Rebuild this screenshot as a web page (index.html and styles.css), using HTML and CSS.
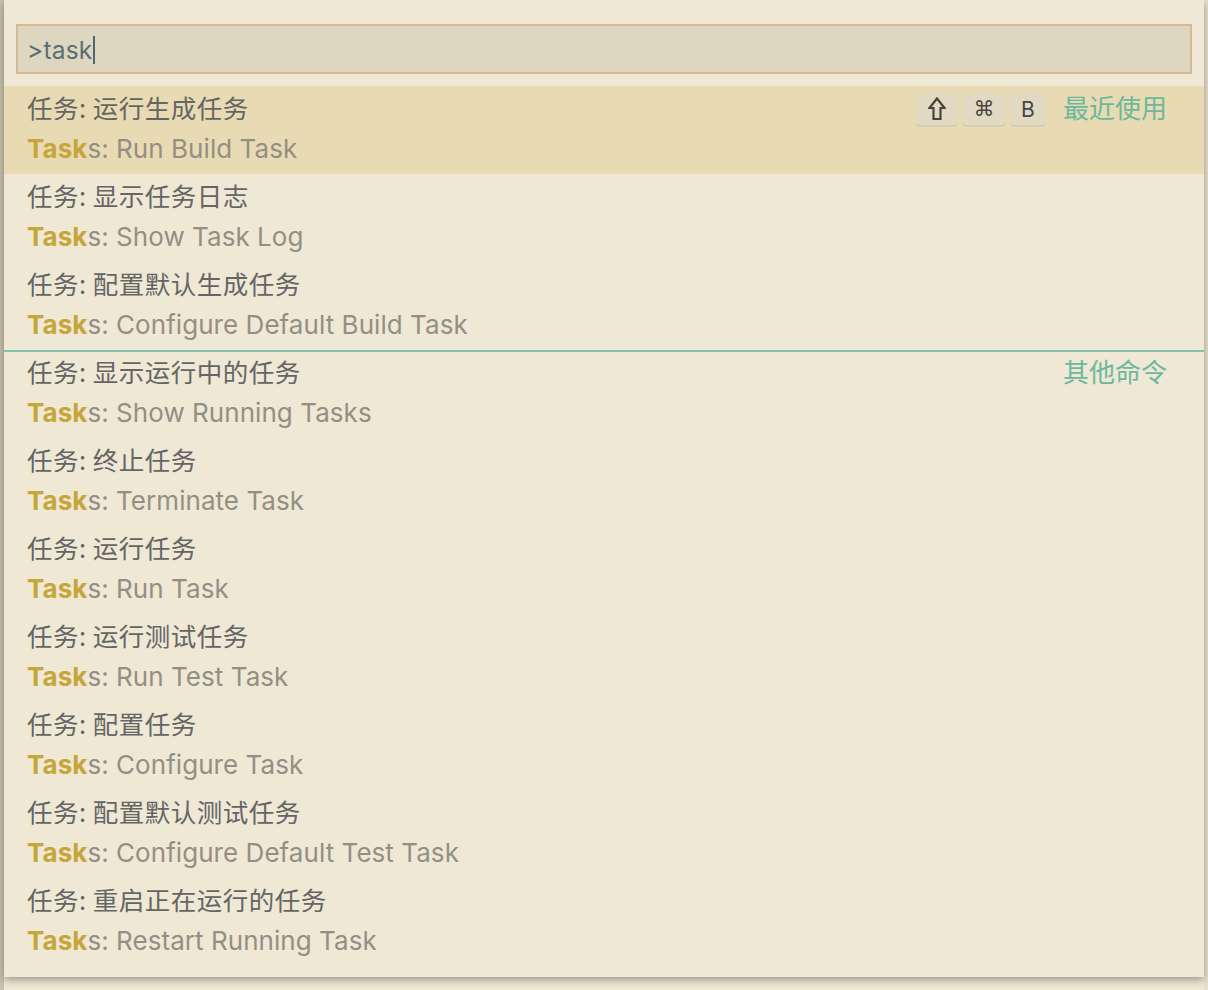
FILE: index.html
```html
<!DOCTYPE html>
<html lang="zh">
<head>
<meta charset="utf-8">
<title>Command Palette</title>
<link rel="stylesheet" href="styles.css">
</head>
<body>
<div class="stage">
  <div class="widget">
    <div class="input-box"><span class="input-text">&gt;task</span><span class="caret"></span></div>
    <div class="list">
      <div class="row selected">
        <div class="line title-line"><span class="title">任务: 运行生成任务</span>
          <span class="meta"><span class="keys"><span class="kbd kbd-shift"><svg class="shift-icon" width="18" height="24" viewBox="0 0 18 24"><path d="M9 1.5 L1.5 11 H5.5 V22 H12.5 V11 H16.5 Z" fill="none" stroke="#4a4540" stroke-width="2.2" stroke-linejoin="miter"/></svg></span><span class="kbd">⌘</span><span class="kbd kbd-letter">B</span></span><span class="group">最近使用</span></span>
        </div>
        <div class="line detail"><b class="hl">Task</b>s: Run Build Task</div>
      </div>
      <div class="row">
        <div class="line title-line"><span class="title">任务: 显示任务日志</span></div>
        <div class="line detail"><b class="hl">Task</b>s: Show Task Log</div>
      </div>
      <div class="row">
        <div class="line title-line"><span class="title">任务: 配置默认生成任务</span></div>
        <div class="line detail"><b class="hl">Task</b>s: Configure Default Build Task</div>
      </div>
      <div class="row separated">
        <div class="line title-line"><span class="title">任务: 显示运行中的任务</span>
          <span class="meta"><span class="group">其他命令</span></span>
        </div>
        <div class="line detail"><b class="hl">Task</b>s: Show Running Tasks</div>
      </div>
      <div class="row">
        <div class="line title-line"><span class="title">任务: 终止任务</span></div>
        <div class="line detail"><b class="hl">Task</b>s: Terminate Task</div>
      </div>
      <div class="row">
        <div class="line title-line"><span class="title">任务: 运行任务</span></div>
        <div class="line detail"><b class="hl">Task</b>s: Run Task</div>
      </div>
      <div class="row">
        <div class="line title-line"><span class="title">任务: 运行测试任务</span></div>
        <div class="line detail"><b class="hl">Task</b>s: Run Test Task</div>
      </div>
      <div class="row">
        <div class="line title-line"><span class="title">任务: 配置任务</span></div>
        <div class="line detail"><b class="hl">Task</b>s: Configure Task</div>
      </div>
      <div class="row">
        <div class="line title-line"><span class="title">任务: 配置默认测试任务</span></div>
        <div class="line detail"><b class="hl">Task</b>s: Configure Default Test Task</div>
      </div>
      <div class="row">
        <div class="line title-line"><span class="title">任务: 重启正在运行的任务</span></div>
        <div class="line detail"><b class="hl">Task</b>s: Restart Running Task</div>
      </div>
    </div>
  </div>
</div>
</body>
</html>
```
FILE: styles.css
```css
html, body {
  margin: 0;
  padding: 0;
}
body {
  width: 1208px;
  height: 990px;
  overflow: hidden;
  background: #ddd6c1;
  font-family: Inter, "Noto Sans", "Noto Sans CJK SC", sans-serif;
}
.stage {
  display: flex;
  padding-left: 4px;
  height: 990px;
  background: linear-gradient(to right, #c9c2ae 0, #c9c2ae 4px, #eee8d5 4px, #eee8d5 1204px, #e7e0cc 1204px);
}
.widget {
  width: 1200px;
  height: 977px;
  box-sizing: border-box;
  background: #eee8d5;
  padding-top: 24px;
  box-shadow: 0 3px 8px rgba(0, 0, 0, 0.35);
  position: relative;
  z-index: 1;
}
.input-box {
  margin: 0 12px;
  height: 50px;
  box-sizing: border-box;
  border: 2px solid #d6b892;
  background: #ddd6c1;
  display: flex;
  align-items: center;
  padding: 2px 0 0 9px;
}
.input-text {
  font-size: 24.5px;
  color: #5b6e75;
  letter-spacing: 0.2px;
}
.caret {
  width: 2px;
  height: 28px;
  background: #4f6670;
  margin-left: 1px;
}
.list {
  margin-top: 12px;
}
.row {
  height: 88px;
  box-sizing: border-box;
  padding: 3px 37px 0 23px;
}
.row.selected {
  background: #e8dbb3;
}
.row.separated {
  border-top: 2px solid #86c2b2;
  padding-top: 1px;
}
.line {
  height: 40px;
  line-height: 40px;
  white-space: nowrap;
}
.title-line {
  display: flex;
  justify-content: space-between;
  align-items: center;
  position: relative;
  top: -2px;
}
.title {
  font-family: "Noto Sans CJK SC", sans-serif;
  font-size: 25.5px;
  color: #656565;
  letter-spacing: 0.5px;
}
.detail {
  font-size: 26px;
  color: #948f84;
  letter-spacing: 0.05px;
}
.hl {
  font-weight: 700;
  color: #c6a53b;
}
.meta {
  display: flex;
  align-items: center;
  gap: 17px;
  position: relative;
  top: 2px;
}
.keys {
  display: flex;
  gap: 5px;
  margin-left: 3px;
}
.kbd {
  height: 32px;
  min-width: 42px;
  box-sizing: border-box;
  display: flex;
  align-items: center;
  justify-content: center;
  background: #e1d9c2;
  border-radius: 4px;
  box-shadow: 0 2px 0 #d6cdb3;
  font-family: "DejaVu Sans", sans-serif;
  font-size: 21px;
  color: #4a4540;
  line-height: 1;
}
.shift-icon {
  display: block;
}
.kbd-letter {
  min-width: 36px;
  font-family: Inter, sans-serif;
  font-size: 21px;
}
.group {
  position: relative;
  top: -2px;
  font-family: "Noto Sans CJK SC", sans-serif;
  font-size: 26px;
  color: #6cb89d;
}
```
